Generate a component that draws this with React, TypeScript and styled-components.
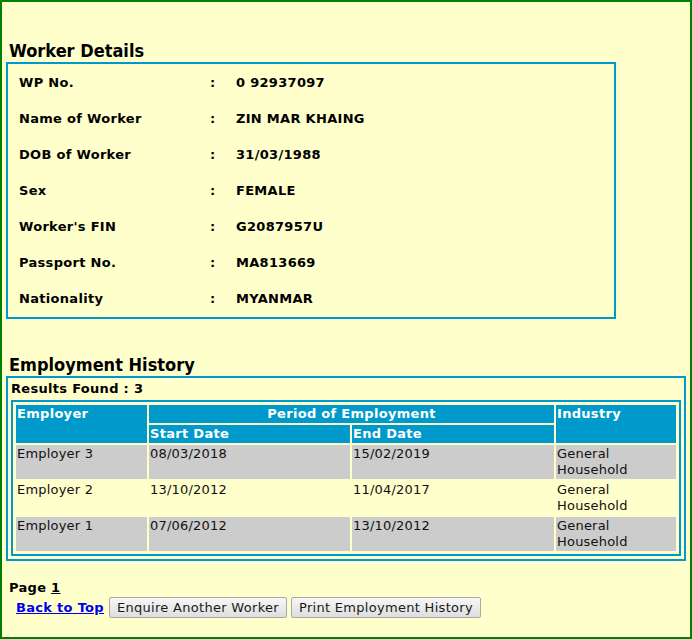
import React from "react"
import styled, { createGlobalStyle } from "styled-components"

const blue = "#0099cc"
const cream = "#ffffcc"

const GlobalStyle = createGlobalStyle`
  html, body {
    margin: 0;
    padding: 0;
    background: ${cream};
  }
  body {
    font-family: "DejaVu Sans", Verdana, sans-serif;
    color: #000;
  }
`

const Frame = styled.div`
  box-sizing: border-box;
  min-height: 100vh;
  border: 2px solid #008000;
  padding: 38px 4px 0 4px;
`

const SectionTitle = styled.h2<{ $gap?: number }>`
  margin: ${(p) => p.$gap ?? 0}px 0 1px 3px;
  font-family: "DejaVu Sans Condensed", "DejaVu Sans", Tahoma, sans-serif;
  font-stretch: condensed;
  font-size: 18px;
  line-height: 21px;
  font-weight: bold;
`

const DetailsBox = styled.div`
  box-sizing: border-box;
  width: 610px;
  border: 2px solid ${blue};
  padding: 1px 0 0 11px;
`

const DetailRow = styled.div`
  display: grid;
  grid-template-columns: 191px 26px 1fr;
  align-items: center;
  height: 36px;
  font-size: 13px;
  font-weight: bold;
  line-height: 16px;
  letter-spacing: 0.3px;
`

const HistoryBox = styled.div`
  box-sizing: border-box;
  width: 680px;
  border: 2px solid ${blue};
  padding: 3px;
`

const ResultsLine = styled.div`
  font-size: 13px;
  font-weight: bold;
  line-height: 16px;
  letter-spacing: 0.3px;
  margin: 0 0 3px 0;
`

const HistoryTable = styled.table`
  width: 100%;
  table-layout: fixed;
  border: 2px solid ${blue};
  padding: 1px;
  border-collapse: separate;
  border-spacing: 2px;
  font-size: 13px;
  line-height: 16px;
`

const HeadCell = styled.th<{ $center?: boolean }>`
  background: ${blue};
  color: #fff;
  font-weight: bold;
  letter-spacing: 0.3px;
  text-align: ${(p) => (p.$center ? "center" : "left")};
  vertical-align: top;
  padding: 1px;
`

const DataCell = styled.td<{ $shaded: boolean }>`
  background: ${(p) => (p.$shaded ? "#cccccc" : "transparent")};
  color: #111;
  vertical-align: top;
  padding: 1px;
  height: 32px;
  letter-spacing: 0.2px;
`

const Pager = styled.div`
  margin: 19px 0 0 3px;
  font-size: 13px;
  font-weight: bold;
  line-height: 16px;
  letter-spacing: 0.3px;

  a {
    color: #000;
    text-decoration: underline;
  }
`

const Actions = styled.div`
  display: flex;
  align-items: center;
  gap: 4px;
  margin: 1px 0 0 10px;
`

const TopLink = styled.a`
  font-size: 13px;
  font-weight: bold;
  color: #0000ee;
  text-decoration: underline;
  letter-spacing: 0.3px;
  margin-right: 1px;
`

const Button = styled.button`
  height: 21px;
  padding: 0 7px;
  font-family: "DejaVu Sans", Verdana, sans-serif;
  font-size: 13px;
  letter-spacing: 0.3px;
  color: #1a1a1a;
  border: 1px solid #a8a8a8;
  border-radius: 2px;
  background: linear-gradient(#f7f7f7, #dedede);
`

const details: [string, string][] = [
  ["WP No.", "0 92937097"],
  ["Name of Worker", "ZIN MAR KHAING"],
  ["DOB of Worker", "31/03/1988"],
  ["Sex", "FEMALE"],
  ["Worker's FIN", "G2087957U"],
  ["Passport No.", "MA813669"],
  ["Nationality", "MYANMAR"],
]

const history = [
  { employer: "Employer 3", start: "08/03/2018", end: "15/02/2019", industry: "General Household" },
  { employer: "Employer 2", start: "13/10/2012", end: "11/04/2017", industry: "General Household" },
  { employer: "Employer 1", start: "07/06/2012", end: "13/10/2012", industry: "General Household" },
]

export default function App() {
  return (
    <>
      <GlobalStyle />
      <Frame>
        <SectionTitle>Worker Details</SectionTitle>
        <DetailsBox>
          {details.map(([label, value]) => (
            <DetailRow key={label}>
              <span>{label}</span>
              <span>:</span>
              <span>{value}</span>
            </DetailRow>
          ))}
        </DetailsBox>

        <SectionTitle $gap={35}>Employment History</SectionTitle>
        <HistoryBox>
          <ResultsLine>Results Found : 3</ResultsLine>
          <HistoryTable>
            <colgroup>
              <col style={{ width: 131 }} />
              <col style={{ width: 201 }} />
              <col style={{ width: 202 }} />
              <col style={{ width: 120 }} />
            </colgroup>
            <thead>
              <tr>
                <HeadCell rowSpan={2}>Employer</HeadCell>
                <HeadCell colSpan={2} $center>Period of Employment</HeadCell>
                <HeadCell rowSpan={2}>Industry</HeadCell>
              </tr>
              <tr>
                <HeadCell>Start Date</HeadCell>
                <HeadCell>End Date</HeadCell>
              </tr>
            </thead>
            <tbody>
              {history.map((row, i) => (
                <tr key={row.employer}>
                  <DataCell $shaded={i % 2 === 0}>{row.employer}</DataCell>
                  <DataCell $shaded={i % 2 === 0}>{row.start}</DataCell>
                  <DataCell $shaded={i % 2 === 0}>{row.end}</DataCell>
                  <DataCell $shaded={i % 2 === 0}>{row.industry}</DataCell>
                </tr>
              ))}
            </tbody>
          </HistoryTable>
        </HistoryBox>

        <Pager>
          Page <a href="#">1</a>
        </Pager>
        <Actions>
          <TopLink href="#">Back to Top</TopLink>
          <Button>Enquire Another Worker</Button>
          <Button>Print Employment History</Button>
        </Actions>
      </Frame>
    </>
  )
}
